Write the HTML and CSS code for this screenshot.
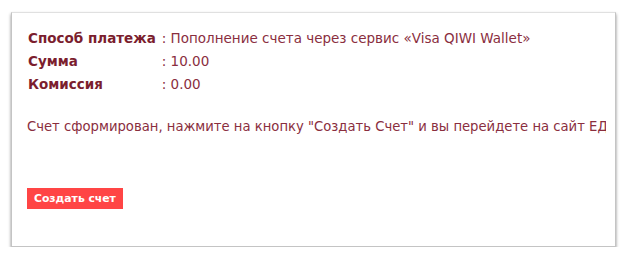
FILE: index.html
```html
<!DOCTYPE html>
<html lang="ru">
<head>
<meta charset="utf-8">
<title>Оплата</title>
<link rel="stylesheet" href="styles.css">
</head>
<body>
<div class="card">
  <div class="inner">
    <table class="info">
      <tr><td class="label">Способ платежа</td><td class="value">: Пополнение счета через сервис «Visa QIWI Wallet»</td></tr>
      <tr><td class="label">Сумма</td><td class="value">: 10.00</td></tr>
      <tr><td class="label">Комиссия</td><td class="value">: 0.00</td></tr>
    </table>
    <div class="msgwrap">
      <p class="message">Счет сформирован, нажмите на кнопку "Создать Счет" и вы перейдете на сайт ЕДИНОГО КОШЕЛЬКА</p>
    </div>
    <button class="btn" type="button">Создать счет</button>
  </div>
</div>
</body>
</html>
```
FILE: styles.css
```css
html, body {
  margin: 0;
  padding: 0;
  background: #fff;
}
body {
  padding: 12px 0 0 11px;
  font-family: "DejaVu Sans", Verdana, sans-serif;
}
.card {
  box-sizing: border-box;
  width: 605px;
  height: 235px;
  border: 1px solid #c4c4c4;
  border-top-color: #e0e0e0;
  box-shadow: 0 2px 3px rgba(0, 0, 0, 0.45);
  background: #fff;
}
.inner {
  margin: 0 9px 0 16px;
  padding-top: 13px;
}
.info {
  border-collapse: collapse;
  font-size: 13.5px;
}
.info td {
  padding: 0;
  height: 23px;
  white-space: nowrap;
}
.info td.label {
  font-weight: bold;
  color: #7b1e2e;
  padding-right: 6px;
}
.value {
  color: #8a2e3e;
}
.msgwrap {
  overflow: hidden;
  margin: 23px 0 0 -1px;
}
.message {
  margin: 0;
  font-size: 13.2px;
  line-height: 17px;
  color: #8a2e3e;
  white-space: nowrap;
}
.btn {
  display: block;
  margin-top: 53px;
  margin-left: -1px;
  border: 0;
  background: #ff4545;
  color: #fff;
  font-family: "DejaVu Sans", Verdana, sans-serif;
  font-weight: bold;
  font-size: 10.8px;
  padding: 0 0 0 7px;
  height: 21px;
  width: 96px;
  text-align: left;
}
```
